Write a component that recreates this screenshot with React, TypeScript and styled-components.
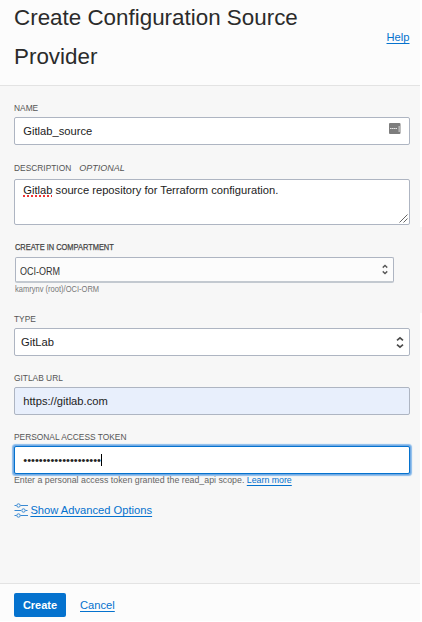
import React from "react";
import styled, { createGlobalStyle, css } from "styled-components";

const blue = "#0572ce";
const line = "#aeb5c2";

const GlobalStyle = createGlobalStyle`
  *, *::before, *::after { box-sizing: border-box; }
  html, body { margin: 0; background: #fff; }
  body { font-family: "Liberation Sans", Arial, sans-serif; font-size: 11.18px; color: #222; overflow: hidden; }
`;

const Panel = styled.form`
  width: 420px;
  height: 621px;
  display: flex;
  flex-direction: column;
  background: #f7f7f7;
`;

const Header = styled.header`
  height: 86px;
  flex: none;
  display: flex;
  justify-content: space-between;
  padding: 0 10.5px 0 14px;
  background: #fcfcfc;
  border-bottom: 1px solid #e3e3e3;
`;

const Title = styled.h1`
  margin: -2px 0 0;
  width: 320px;
  font-size: 22.4px;
  font-weight: 400;
  line-height: 39px;
  color: #2b2b2b;
`;

const Link = styled.a`
  color: ${blue};
  text-decoration: underline;
  text-underline-offset: 1.5px;
  text-decoration-thickness: 1px;
  text-decoration-skip-ink: none;
  white-space: nowrap;
`;

const HelpLink = styled(Link)`
  line-height: 14px;
  margin-top: 30px;
`;

const Body = styled.main`
  flex: 1;
  display: flex;
  flex-direction: column;
  padding: 15px 10px 0 14px;
`;

const Field = styled.section<{ $height: number }>`
  height: ${(p) => p.$height}px;
  flex: none;
  display: flex;
  flex-direction: column;
`;

const Label = styled.label<{ $height?: number; $lineHeight?: number }>`
  height: ${(p) => p.$height ?? 16}px;
  flex: none;
  line-height: ${(p) => p.$lineHeight ?? 14}px;
  font-size: 8.4px;
  color: #555;
  white-space: pre;
`;

const Optional = styled.em`
  margin-left: 8px;
  font-size: 9px;
`;

const Control = styled.div<{ $tint?: boolean; $focus?: boolean; $select?: boolean }>`
  height: 28px;
  flex: none;
  display: flex;
  align-items: center;
  padding: 0 ${(p) => (p.$select ? 5 : 8)}px 0 ${(p) => (p.$select ? 6 : 8.3)}px;
  border: 1px solid ${line};
  border-radius: 2px;
  background: ${(p) => (p.$tint ? "#e8effc" : "#fff")};
  ${(p) =>
    p.$focus &&
    css`
      border-color: ${blue};
      box-shadow: 0 0 0 1px #71aae4, 0 0 1px 1.5px #8bbcec;
    `}
`;

const Value = styled.span`
  flex: 1;
  line-height: 14px;
  white-space: nowrap;
`;

const TextArea = styled(Control)`
  height: 46px;
  align-items: flex-start;
  justify-content: space-between;
  padding: 4px 1px 0 8.3px;
`;

const Misspelled = styled.span`
  text-decoration: underline dotted #e33;
  text-decoration-thickness: 1.5px;
  text-underline-offset: 1px;
  text-decoration-skip-ink: none;
`;

const ResizeGrip = styled.svg`
  align-self: flex-end;
  margin-bottom: 1px;
`;

const Compartment = styled(Field)`
  margin-right: -12px;
  padding: 14px 28px 0 1px;
  background: #f7f7f7;
`;

const CompartmentLabel = styled(Label)`
  font-size: 8.9px;
  line-height: 12px;
  color: #444;
  -webkit-text-stroke: 0.25px #444;
  transform: scaleX(0.838);
  transform-origin: left;
`;

const CompartmentSelect = styled(Control)`
  height: 26px;
  padding: 0 5px 0 4px;
  background: #fcfcfc;
  border-bottom: 2px solid #c3c9d0;
`;

const CompartmentValue = styled(Value)`
  font-size: 10.6px;
  color: #333;
  padding-top: 2px;
  transform: scaleX(0.85);
  transform-origin: left;
`;

const CompartmentPath = styled.div`
  font-size: 9.6px;
  line-height: 11px;
  color: #777;
  white-space: nowrap;
  transform: scaleX(0.785);
  transform-origin: left;
`;

const Dots = styled.span`
  font-size: 11.1px;
  line-height: 14px;
`;

const Caret = styled.span`
  width: 1px;
  height: 12px;
  background: #000;
`;

const Hint = styled.div`
  font-size: 8.8px;
  line-height: 12px;
  color: #666;
  white-space: nowrap;
`;

const Advanced = styled.div`
  display: flex;
  align-items: center;
  gap: 1.4px;
  height: 16px;
`;

const Footer = styled.footer`
  height: 38px;
  flex: none;
  display: flex;
  align-items: flex-start;
  gap: 14px;
  padding: 9px 14px 0;
  background: #fcfcfc;
  border-top: 1px solid #e3e3e3;
`;

const Submit = styled.button`
  width: 52px;
  height: 24px;
  padding: 0;
  border: 0;
  border-radius: 2px;
  background: ${blue};
  color: #fff;
  font: bold 11px "Liberation Sans", Arial, sans-serif;
`;

const CancelLink = styled(Link)`
  line-height: 24px;
`;

const BadgeSlot = styled.span`
  display: flex;
  margin-bottom: 5px;
`;

const Chevrons = ({ small }: { small?: boolean }) => (
  <svg
    width={small ? 6 : 8}
    height={small ? 11 : 13}
    viewBox="0 0 8 13"
    preserveAspectRatio="none"
    fill="none"
    stroke={small ? "#555" : "#4a4a4a"}
    strokeWidth="1.7"
  >
    <path d="M1 4.3 4 1.8l3 2.5M1 8.7l3 2.5 3-2.5" />
  </svg>
);

const PasswordBadge = () => (
  <svg width="12" height="11" viewBox="0 0 12 11">
    <rect width="11.5" height="11" rx="1" fill="#7d7d7d" />
    <path d="M1 5.5h7" stroke="#e6e6e6" strokeWidth="1.2" strokeDasharray="1.6 .4" />
    <path d="M10.2 3v6" stroke="#b5b5b5" strokeWidth="1.6" />
  </svg>
);

const Sliders = () => (
  <svg width="15" height="15" viewBox="0 0 15 15" fill="none" stroke="#3989d2" strokeWidth="1">
    <path d="M.5 2.5h2M6.5 2.5H14M.5 7.5H7M11.500 7.500h2M.5 12.5h2M6.5 12.5H14" />
    <circle cx="4.5" cy="2.5" r="1.7" />
    <circle cx="9.5" cy="7.5" r="1.7" />
    <circle cx="4.5" cy="12.5" r="1.7" />
  </svg>
);

export default function App() {
  return (
    <>
      <GlobalStyle />
      <Panel>
        <Header>
          <Title>Create Configuration Source Provider</Title>
          <HelpLink>Help</HelpLink>
        </Header>
        <Body>
          <Field $height={60}>
            <Label>NAME</Label>
            <Control>
              <Value>Gitlab_source</Value>
              <BadgeSlot>
                <PasswordBadge />
              </BadgeSlot>
            </Control>
          </Field>
          <Field $height={66}>
            <Label $height={18}>
              DESCRIPTION<Optional>OPTIONAL</Optional>
            </Label>
            <TextArea>
              <span>
                <Misspelled>Gitlab</Misspelled> source repository for Terraform configuration.
              </span>
              <ResizeGrip width="9" height="9" viewBox="0 0 9 9" stroke="#555" strokeWidth="0.9">
                <path d="M.5 8.5l8-8M4.5 8.5l4-4" />
              </ResizeGrip>
            </TextArea>
          </Field>
          <Compartment $height={86}>
            <CompartmentLabel>CREATE IN COMPARTMENT</CompartmentLabel>
            <CompartmentSelect>
              <CompartmentValue>OCI-ORM</CompartmentValue>
              <Chevrons small />
            </CompartmentSelect>
            <CompartmentPath>kamrynv (root)/OCI-ORM</CompartmentPath>
          </Compartment>
          <Field $height={59}>
            <Label $height={15} $lineHeight={12}>TYPE</Label>
            <Control $select>
              <Value>GitLab</Value>
              <Chevrons />
            </Control>
          </Field>
          <Field $height={59}>
            <Label $height={15} $lineHeight={12}>GITLAB URL</Label>
            <Control $tint>
              <Value>https://gitlab.com</Value>
            </Control>
          </Field>
          <Field $height={71}>
            <Label $height={15} $lineHeight={12}>PERSONAL ACCESS TOKEN</Label>
            <Control $focus>
              <Dots>••••••••••••••••••••</Dots>
              <Caret />
            </Control>
            <Hint>
              Enter a personal access token granted the read_api scope. <Link>Learn more</Link>
            </Hint>
          </Field>
          <Advanced>
            <Sliders />
            <Link>Show Advanced Options</Link>
          </Advanced>
        </Body>
        <Footer>
          <Submit type="button">Create</Submit>
          <CancelLink>Cancel</CancelLink>
        </Footer>
      </Panel>
    </>
  );
}
